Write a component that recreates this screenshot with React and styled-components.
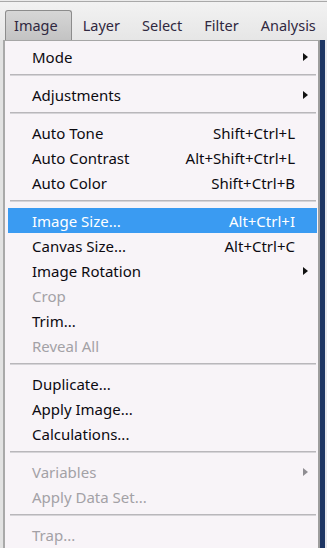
import React from "react";
import styled, { createGlobalStyle } from "styled-components";

const Global = createGlobalStyle`
  html, body { margin: 0; padding: 0; }
  body {
    background: #ebebeb;
    font-family: "Noto Sans", "Open Sans", "Liberation Sans", sans-serif;
  }
`;

const Page = styled.div`
  width: 327px;
  height: 548px;
  display: flex;
  flex-direction: column;
  overflow: hidden;
`;

const MenuBar = styled.div`
  height: 39px;
  flex: none;
  border-top: 1px solid #a9a9a9;
  margin-top: 1px;
  background: linear-gradient(#f2f2f2, #e6e6e6);
  display: flex;
  align-items: flex-end;
  padding-left: 5px;
  box-sizing: border-box;
  white-space: nowrap;
`;

const MenuTitle = styled.div`
  height: 30px;
  display: flex;
  align-items: center;
  box-sizing: border-box;
  padding: ${(p) => (p.$active ? "0 13px 1px 8px" : "0 10px 1px")};
  font-size: 14.5px;
  color: #302840;
  border: 1px solid ${(p) => (p.$active ? "#8c8c8c" : "transparent")};
  border-bottom: none;
  border-radius: 3px 3px 0 0;
  background: ${(p) =>
    p.$active ? "linear-gradient(#d6d6d6, #c3c3c3)" : "transparent"};
`;

const Body = styled.div`
  flex: 1;
  display: flex;
  min-height: 0;
`;

const LeftGutter = styled.div`
  width: 3px;
  flex: none;
  background: #e2e2e2;
`;

const RightGutter = styled.div`
  width: 5px;
  flex: none;
  background: #1d3563;
  border-right: 2px solid #e8e8ec;
`;

const Menu = styled.div`
  flex: 1;
  background: #f8f4f8;
  border-top: 1px solid #a6a6a6;
  border-left: 2px solid #a9a9a9;
  border-right: 2px solid #9d9d9d;
  padding-top: 3px;
  display: flex;
  flex-direction: column;
`;

const Row = styled.div`
  height: 25px;
  margin: 0 1px 0 3px;
  padding-left: 24px;
  display: grid;
  grid-template-columns: 1fr auto 22px;
  align-items: center;
  font-size: 15px;
  color: ${(p) => (p.$disabled ? "#a3a1a6" : p.$active ? "#ffffff" : "#0c0a10")};
  background: ${(p) => (p.$active ? "#3a9bf2" : "transparent")};
  white-space: nowrap;
`;

const Shortcut = styled.span`
  text-align: right;
`;

const ArrowCell = styled.span`
  display: flex;
  align-items: center;
  padding-left: 8px;
`;

const Arrow = styled.span`
  width: 0;
  height: 0;
  border-top: 4px solid transparent;
  border-bottom: 4px solid transparent;
  border-left: 5px solid ${(p) => (p.$disabled ? "#8f8d92" : "#111")};
`;

const Separator = styled.div`
  height: 0;
  margin: 5px 2px 6px 5px;
  border-top: 1px solid #b9b7bb;
  border-bottom: 1px solid #d6d4d8;
`;

const items = [
  { label: "Mode", sub: true },
  "sep",
  { label: "Adjustments", sub: true },
  "sep",
  { label: "Auto Tone", key: "Shift+Ctrl+L" },
  { label: "Auto Contrast", key: "Alt+Shift+Ctrl+L" },
  { label: "Auto Color", key: "Shift+Ctrl+B" },
  "sep",
  { label: "Image Size...", key: "Alt+Ctrl+I", active: true },
  { label: "Canvas Size...", key: "Alt+Ctrl+C" },
  { label: "Image Rotation", sub: true },
  { label: "Crop", disabled: true },
  { label: "Trim..." },
  { label: "Reveal All", disabled: true },
  "sep",
  { label: "Duplicate..." },
  { label: "Apply Image..." },
  { label: "Calculations..." },
  "sep",
  { label: "Variables", sub: true, disabled: true },
  { label: "Apply Data Set...", disabled: true },
  "sep",
  { label: "Trap...", disabled: true },
];

export default function App() {
  return (
    <Page>
      <Global />
      <MenuBar>
        <MenuTitle $active>Image</MenuTitle>
        <MenuTitle>Layer</MenuTitle>
        <MenuTitle>Select</MenuTitle>
        <MenuTitle>Filter</MenuTitle>
        <MenuTitle>Analysis</MenuTitle>
      </MenuBar>
      <Body>
        <LeftGutter />
        <Menu>
          {items.map((it, i) =>
            it === "sep" ? (
              <Separator key={i} />
            ) : (
              <Row key={i} $active={it.active} $disabled={it.disabled}>
                <span>{it.label}</span>
                <Shortcut>{it.key || ""}</Shortcut>
                <ArrowCell>
                  {it.sub && <Arrow $disabled={it.disabled} />}
                </ArrowCell>
              </Row>
            )
          )}
        </Menu>
        <RightGutter />
      </Body>
    </Page>
  );
}
